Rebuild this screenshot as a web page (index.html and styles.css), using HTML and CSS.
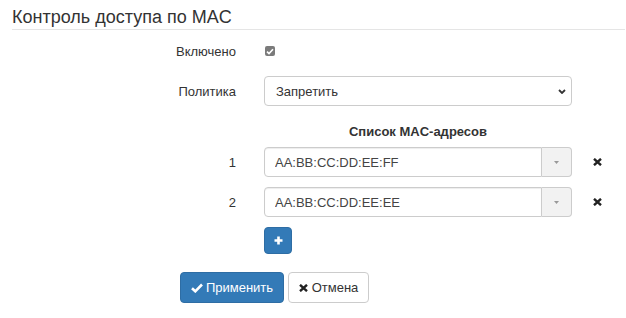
FILE: index.html
```html
<!DOCTYPE html>
<html lang="ru">
<head>
<meta charset="utf-8">
<link rel="stylesheet" href="styles.css">
</head>
<body>
<div class="page">
  <h2 class="legend">Контроль доступа по MAC</h2>
  <form class="form">
    <div class="row row-check">
      <label class="lbl">Включено</label>
      <div class="cell">
        <span class="checkbox"><svg width="8" height="7" viewBox="0 0 8 7"><path d="M1 3.6 L3 5.6 L7 1.2" fill="none" stroke="#fff" stroke-width="1.6"/></svg></span>
      </div>
    </div>
    <div class="row row-select">
      <label class="lbl">Политика</label>
      <div class="cell">
        <div class="select"><span>Запретить</span><svg width="8" height="5" viewBox="0 0 8 5"><path d="M1 1 L4 4 L7 1" fill="none" stroke="#333" stroke-width="1.8"/></svg></div>
      </div>
    </div>
    <div class="row row-head">
      <span class="lbl"></span>
      <div class="cell heading">Список MAC-адресов</div>
    </div>
    <div class="row row-mac">
      <span class="lbl">1</span>
      <div class="cell group">
        <input class="input" type="text" value="AA:BB:CC:DD:EE:FF">
        <span class="addon"><svg width="5" height="3" viewBox="0 0 5 3"><path d="M0 0 H5 L2.5 3 Z" fill="#999"/></svg></span>
      </div>
      <span class="remove"><svg width="9" height="8" viewBox="0 0 9 8"><path d="M1 0.8 L8 7.2 M8 0.8 L1 7.2" stroke="#222" stroke-width="2.4"/></svg></span>
    </div>
    <div class="row row-mac">
      <span class="lbl">2</span>
      <div class="cell group">
        <input class="input" type="text" value="AA:BB:CC:DD:EE:EE">
        <span class="addon"><svg width="5" height="3" viewBox="0 0 5 3"><path d="M0 0 H5 L2.5 3 Z" fill="#999"/></svg></span>
      </div>
      <span class="remove"><svg width="9" height="8" viewBox="0 0 9 8"><path d="M1 0.8 L8 7.2 M8 0.8 L1 7.2" stroke="#222" stroke-width="2.4"/></svg></span>
    </div>
    <div class="row row-add">
      <span class="lbl"></span>
      <div class="cell">
        <button type="button" class="btn btn-primary btn-add"><svg width="9" height="9" viewBox="0 0 9 9"><path d="M4.5 0.5 V8.5 M0.5 4.5 H8.5" stroke="#fff" stroke-width="2.6"/></svg></button>
      </div>
    </div>
    <div class="actions">
      <button type="button" class="btn btn-primary btn-wide btn-apply"><svg width="12" height="10" viewBox="0 0 12 10"><path d="M1 5.2 L4.3 8.3 L11 1.5" fill="none" stroke="#fff" stroke-width="2.6"/></svg><span>Применить</span></button>
      <button type="button" class="btn btn-default btn-wide btn-cancel"><svg width="9" height="8" viewBox="0 0 9 8"><path d="M1 0.8 L8 7.2 M8 0.8 L1 7.2" stroke="#222" stroke-width="2.4"/></svg><span>Отмена</span></button>
    </div>
  </form>
</div>
</body>
</html>
```

FILE: styles.css
```css
* { box-sizing: border-box; }
body {
  margin: 0;
  background: #fff;
  font-family: "Liberation Sans", Arial, sans-serif;
  font-size: 13px;
  color: #333;
}
svg { flex: none; display: block; }
.page {
  padding: 0 1px 0 12px;
}
.legend {
  margin: 0;
  font-weight: normal;
  font-size: 18px;
  line-height: 20px;
  padding: 7px 0 2px;
  border-bottom: 1px solid #e5e5e5;
}
.form {
  display: flex;
  flex-direction: column;
}
.row {
  display: grid;
  grid-template-columns: 252px 308px auto;
  align-items: center;
  height: 30px;
}
.lbl {
  text-align: right;
  padding-right: 28px;
}
.row-check { margin-top: 6px; }
.row-select { margin-top: 10px; }
.row-head { margin-top: 15px; height: 20px; }
.row-mac { margin-top: 6px; }
.row-mac + .row-mac { margin-top: 10px; }
.row-add { margin-top: 10px; height: 27px; }
.cell { display: flex; align-items: center; }
.checkbox {
  display: inline-flex;
  align-items: center;
  justify-content: center;
  width: 10px;
  height: 10px;
  margin-left: 1px;
  background: #7b7b7b;
  border-radius: 2px;
}
.select {
  width: 100%;
  height: 30px;
  display: flex;
  align-items: center;
  justify-content: space-between;
  padding: 0 5px 0 11px;
  border: 1px solid #ccc;
  border-radius: 4px;
  color: #333;
  background: #fff;
}
.heading {
  justify-content: center;
  font-weight: bold;
}
.group { height: 30px; }
.input {
  flex: 1;
  min-width: 0;
  height: 30px;
  border: 1px solid #ccc;
  border-radius: 4px 0 0 4px;
  padding: 0 10px;
  font-family: inherit;
  font-size: 13px;
  color: #444;
  box-shadow: inset 0 1px 1px rgba(0,0,0,.075);
  outline: none;
}
.addon {
  width: 30px;
  height: 30px;
  display: flex;
  align-items: center;
  justify-content: center;
  background: #f2f2f2;
  border: 1px solid #ccc;
  border-left: 0;
  border-radius: 0 4px 4px 0;
}
.remove {
  display: flex;
  padding-left: 21px;
}
.btn {
  display: inline-flex;
  align-items: center;
  justify-content: center;
  border-radius: 4px;
  font-family: inherit;
  font-size: 13px;
  cursor: pointer;
  padding: 0;
}
.btn-primary {
  background: #337ab7;
  border: 1px solid #2e6da4;
  color: #fff;
}
.btn-default {
  background: #fff;
  border: 1px solid #ccc;
  color: #333;
}
.btn-add {
  width: 28px;
  height: 27px;
}
.actions {
  display: flex;
  gap: 4px;
  margin-top: 18px;
  padding-left: 168px;
}
.btn-wide {
  height: 31px;
  padding: 0;
  gap: 3px;
  white-space: nowrap;
}
.btn-apply { width: 104px; }
.btn-cancel { width: 81px; gap: 4px; }
```
